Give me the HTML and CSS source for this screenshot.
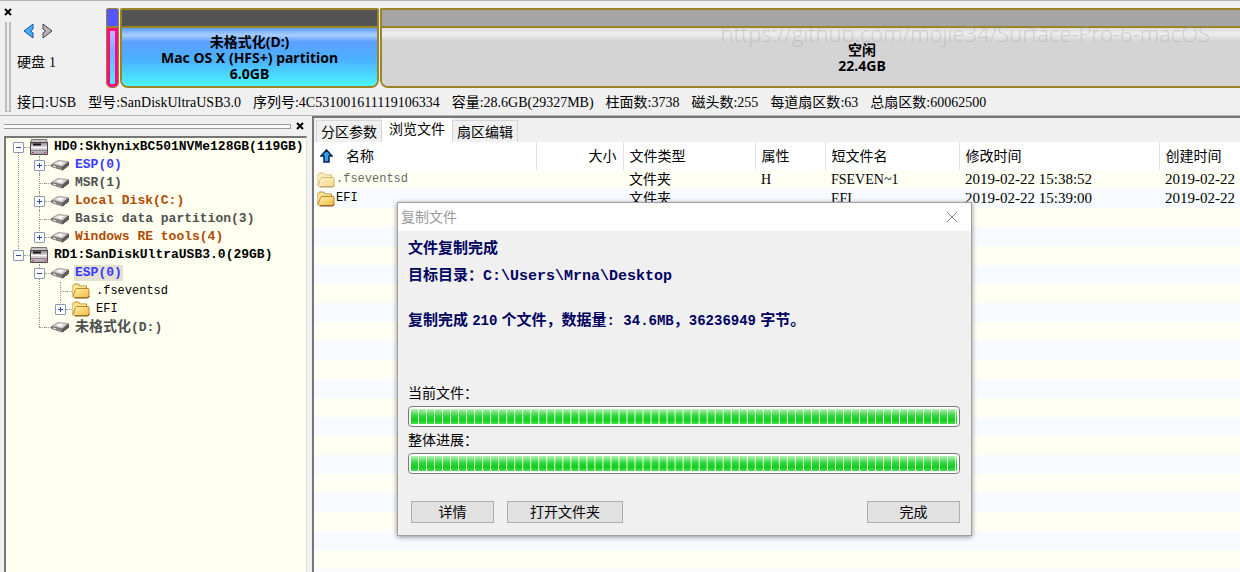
FILE: index.html
```
<!DOCTYPE html>
<html lang="zh-CN">
<head>
<meta charset="utf-8">
<title>硬盘分区</title>
<link rel="stylesheet" href="styles.css">
</head>
<body>
<svg class="defs" width="0" height="0" aria-hidden="true">
  <defs>
    <linearGradient id="gold" x1="0" y1="0" x2="1" y2="1"><stop offset="0" stop-color="#fff3b0"/><stop offset="1" stop-color="#f5b93c"/></linearGradient>
    <linearGradient id="steel" x1="0" y1="0" x2="0" y2="1"><stop offset="0" stop-color="#8d8488"/><stop offset="0.4" stop-color="#e2dde0"/><stop offset="1" stop-color="#a49ca0"/></linearGradient>
    <symbol id="i-folder" viewBox="0 0 18 16">
      <path d="M1 13.5V2.5L2.5 1h4L8 3h6.5V5" fill="#ffe9a0" stroke="#b8862c"/>
      <path d="M1 13.5V3.5h13V5H4z" fill="#ffe28a"/>
      <path d="M4.5 5.5h12l.5 1v6.5l-1.500 1.500H2L1 13.500 3.500 6.500z" fill="url(#gold)" stroke="#b8862c"/>
      <path d="M3 15h13l1.500-2" fill="none" stroke="#7c5a20"/>
    </symbol>
    <symbol id="i-disk" viewBox="0 0 18 16">
      <path d="M1.500.500h15l1 4H.500z" fill="#c9c4c6" stroke="#77716f"/>
      <path d="M.5 3.500h17v12H.5z" fill="url(#steel)" stroke="#4d484a"/>
      <path d="M3 5.500h8" stroke="#111" stroke-width="2"/>
      <path d="M1 8.500h16" stroke="#fff"/>
      <path d="M1 11.500h16" stroke="#888083"/>
      <path d="M2 13.500h2M14 13.500h2" stroke="#c03a78"/>
    </symbol>
    <symbol id="i-part" viewBox="0 0 18 12">
      <path d="M1 5 7 1.500l10 1L11.500 8z" fill="#d0cdcd" stroke="#a5a1a1"/>
      <path d="M.5 5.500v2L11.500 11V8z" fill="#8d8989" stroke="#777373"/>
      <path d="M11.500 8v3l6-4.500V3z" fill="#5f5b5b" stroke="#555151"/>
      <path d="M5 4l4-1.500 4 1L9.500 6z" fill="#f8f7f7"/>
      <path d="M2 7l3 1" stroke="#eee"/>
    </symbol>
  </defs>
</svg>

<header class="disk-panel">
  <div class="grip">
    <button class="close" type="button" aria-label="关闭磁盘栏"><svg viewBox="0 0 8 8"><path d="M1 1l6 6M7 1L1 7"/></svg></button>
    <i class="grip-bars"></i>
  </div>
  <div class="disk-main">
    <div class="disk-row">
      <div class="disk-nav">
        <div class="arrows">
          <button type="button" aria-label="上一个硬盘"><svg viewBox="0 0 12 16"><path d="M10 1v5L7.500 8l2.500 2v5L1 8z" fill="#45b2f5" stroke="#1c4fa0"/></svg></button>
          <button type="button" aria-label="下一个硬盘"><svg viewBox="0 0 12 16"><path d="M2 1v5l2.500 2L2 10v5l9-7z" fill="#b5b5b5" stroke="#454545"/></svg></button>
        </div>
        <span class="disk-name">硬盘 <span class="latin">1</span></span>
      </div>
      <div class="part part-esp"><div class="cap"></div><div class="body"></div></div>
      <div class="part part-hfs"><div class="cap"></div>
        <div class="body"><span>未格式化(D:)</span><span>Mac OS X (HFS+) partition</span><span>6.0GB</span></div></div>
      <div class="part part-free"><div class="cap"></div>
        <div class="body"><span>空闲</span><span>22.4GB</span></div></div>
    </div>
    <ul class="facts">
      <li>接口<span class="latin">:USB</span></li>
      <li>型号<span class="latin">:SanDiskUltraUSB3.0</span></li>
      <li>序列号<span class="latin">:4C531001611119106334</span></li>
      <li>容量<span class="latin">:28.6GB(29327MB)</span></li>
      <li>柱面数<span class="latin">:3738</span></li>
      <li>磁头数<span class="latin">:255</span></li>
      <li>每道扇区数<span class="latin">:63</span></li>
      <li>总扇区数<span class="latin">:60062500</span></li>
    </ul>
  </div>
  <p class="watermark">https://github.com/mojie34/Surface-Pro-6-macOS</p>
</header>

<main class="work">
  <aside class="side">
    <div class="dock"><i class="dock-bars"></i>
      <button class="close" type="button" aria-label="关闭目录树"><svg viewBox="0 0 8 8"><path d="M1 1l6 6M7 1L1 7"/></svg></button></div>
    <nav class="tree-box">
      <ul class="tree">
        <li><div class="node"><button class="tog" type="button" aria-label="折叠 HD0"></button><svg class="ico disk"><use href="#i-disk"/></svg><span class="lbl">HD0:SkhynixBC501NVMe128GB(119GB)</span></div>
          <ul>
            <li><div class="node"><button class="tog plus" type="button" aria-label="展开 ESP"></button><svg class="ico part-ico"><use href="#i-part"/></svg><span class="lbl blue">ESP(0)</span></div></li>
            <li><div class="node"><i class="stub"></i><svg class="ico part-ico"><use href="#i-part"/></svg><span class="lbl gray">MSR(1)</span></div></li>
            <li><div class="node"><button class="tog plus" type="button" aria-label="展开 Local Disk"></button><svg class="ico part-ico"><use href="#i-part"/></svg><span class="lbl rust">Local Disk(C:)</span></div></li>
            <li><div class="node"><i class="stub"></i><svg class="ico part-ico"><use href="#i-part"/></svg><span class="lbl gray">Basic data partition(3)</span></div></li>
            <li><div class="node"><button class="tog plus" type="button" aria-label="展开 Windows RE tools"></button><svg class="ico part-ico"><use href="#i-part"/></svg><span class="lbl rust">Windows RE tools(4)</span></div></li>
          </ul></li>
        <li><div class="node"><button class="tog" type="button" aria-label="折叠 RD1"></button><svg class="ico disk"><use href="#i-disk"/></svg><span class="lbl">RD1:SanDiskUltraUSB3.0(29GB)</span></div>
          <ul>
            <li><div class="node"><button class="tog" type="button" aria-label="折叠 ESP"></button><svg class="ico part-ico"><use href="#i-part"/></svg><span class="lbl blue selected">ESP(0)</span></div>
              <ul>
                <li><div class="node"><i class="stub"></i><svg class="ico"><use href="#i-folder"/></svg><span class="lbl plain">.fseventsd</span></div></li>
                <li><div class="node"><button class="tog plus" type="button" aria-label="展开 EFI"></button><svg class="ico"><use href="#i-folder"/></svg><span class="lbl plain">EFI</span></div></li>
              </ul></li>
            <li><div class="node"><i class="stub"></i><svg class="ico part-ico"><use href="#i-part"/></svg><span class="lbl gray"><span class="han">未格式化</span>(D:)</span></div></li>
          </ul></li>
      </ul>
    </nav>
  </aside>

  <section class="content">
    <div class="tabs" role="tablist">
      <button type="button" role="tab">分区参数</button>
      <button type="button" role="tab" class="active" aria-selected="true">浏览文件</button>
      <button type="button" role="tab">扇区编辑</button>
    </div>
    <div class="list">
      <table>
        <colgroup><col class="c-name"><col class="c-size"><col class="c-type"><col class="c-attr"><col class="c-short"><col class="c-mod"><col></colgroup>
        <thead>
          <tr><th><span class="cell"><svg class="up" viewBox="0 0 13 14"><path d="M6.500 1 12 7H9v6H4V7H1z" fill="#31a3ee" stroke="#08204a" stroke-width="1.500"/></svg>名称</span></th><th class="right">大小</th><th>文件类型</th><th>属性</th><th>短文件名</th><th>修改时间</th><th>创建时间</th></tr>
        </thead>
        <tbody>
          <tr><td><span class="cell file hidden-file"><svg class="ico"><use href="#i-folder"/></svg><span class="mono">.fseventsd</span></span></td><td></td><td>文件夹</td><td class="latin">H</td><td class="latin">FSEVEN~1</td><td class="date">2019-02-22 15:38:52</td><td class="date">2019-02-22</td></tr>
          <tr><td><span class="cell file"><svg class="ico"><use href="#i-folder"/></svg><span class="mono">EFI</span></span></td><td></td><td>文件夹</td><td class="latin"></td><td class="latin">EFI</td><td class="date">2019-02-22 15:39:00</td><td class="date">2019-02-22</td></tr>
        </tbody>
      </table>
    </div>

    <div class="dialog" role="dialog" aria-labelledby="dlg-title">
      <div class="title"><span id="dlg-title">复制文件</span>
        <button type="button" aria-label="关闭"><svg viewBox="0 0 12 12"><path d="M1 1l10 10M11 1L1 11"/></svg></button></div>
      <div class="dialog-body">
        <div class="message">
          <p class="big">文件复制完成</p>
          <p class="big">目标目录：<span class="path">C:\Users\Mrna\Desktop</span></p>
          <p class="sum">复制完成 <span class="num">210</span> 个文件，数据量<span class="num">: 34.6MB</span>，<span class="num">36236949</span> 字节。</p>
        </div>
        <label for="p1">当前文件：</label>
        <progress id="p1" value="100" max="100"></progress>
        <label for="p2">整体进展：</label>
        <progress id="p2" value="100" max="100"></progress>
        <div class="actions">
          <button type="button" class="b-detail">详情</button>
          <button type="button" class="b-open">打开文件夹</button>
          <button type="button" class="b-done">完成</button>
        </div>
      </div>
    </div>
  </section>
</main>
</body>
</html>
```
FILE: styles.css
```
* { box-sizing: border-box; }
body {
  margin: 0; min-height: 100vh; display: flex; flex-direction: column;
  background: #f0f0f0; color: #000; overflow: hidden;
  font: 14px/18px "Liberation Sans", "Noto Sans CJK SC", sans-serif;
}
button { font: inherit; color: inherit; padding: 0; margin: 0; border: 0; background: none; }
ul { list-style: none; margin: 0; padding: 0; }
p { margin: 0; }
.defs { position: absolute; }
.mono { font-family: "Liberation Mono", monospace; font-size: 12px; }
.latin { font-family: "Liberation Serif", serif; font-size: 14px; }
.date { font-family: "Liberation Serif", serif; font-size: 15px; }

/* disk strip */
.disk-panel { position: relative; display: flex; padding-top: 7px; border-top: 1px solid #b4b4b4; border-bottom: 1px solid #b4b4b4; }
.grip { width: 16px; display: flex; flex-direction: column; padding-left: 4px; gap: 6px; }
.close { width: 8px; height: 8px; display: flex; }
.close svg { width: 8px; height: 8px; stroke: #000; stroke-width: 2; }
.grip-bars { width: 6px; flex: 1; margin: 0 0 3px 1px; border: 1px solid #bdbdbd; border-width: 0 2px 1px; }
.disk-main { flex: 1; min-width: 0; padding-bottom: 3px; }
.disk-row { display: flex; gap: 1px; height: 80px; }
.disk-nav { width: 89px; padding-top: 15px; display: flex; flex-direction: column; gap: 14px; }
.arrows { display: flex; gap: 6px; padding-left: 7px; }
.arrows button, .arrows svg { width: 12px; height: 16px; display: block; }
.disk-name { padding-left: 1px; }
.part { display: flex; flex-direction: column; border: 2px solid #9c8425; border-radius: 2px 2px 8px 8px; overflow: hidden; }
.cap { height: 18px; border-bottom: 2px solid #9c8425; }
.body { flex: 1; display: flex; flex-direction: column; align-items: center; padding-top: 6px; font: bold 14px/16px "Noto Sans", "Noto Sans CJK SC", sans-serif; }
.part-esp { width: 13px; border-width: 1px; border-radius: 2px 2px 5px 5px; }
.part-esp .cap { height: 19px; background: #5656ff; }
.part-esp .body { border: 3px solid #ff0a80; border-radius: 0 0 4px 4px; background: linear-gradient(#c3b8ff, #6ab5ff 40%, #50ecff); }
.part-hfs { width: 259px; }
.part-hfs .cap { background: #535353; }
.part-hfs .body { background: linear-gradient(#5b9dff, #a9ceff 7px, #5ca0ff 14px, #4bb1ff 32px, #4cf4ff); }
.part-free { flex: 1; border-right: 0; border-radius: 2px 0 0 8px; }
.part-free .cap { background: #a5a5a5; }
.part-free .body { padding: 14px 0 0 102px; background: linear-gradient(#dcdcdc, #eee 6px, #d4d4d4 13px); }
.facts { display: flex; gap: 12px; padding: 5px 0 0 1px; white-space: nowrap; }
.watermark { position: absolute; right: 30px; top: 17px; font: 300 22px/30px "Open Sans", sans-serif; color: rgba(150, 150, 150, .35); }

/* work area */
.work { flex: 1; display: flex; min-height: 0; }
.side { width: 312px; display: flex; flex-direction: column; padding: 0 5px 0 4px; }
.dock { height: 20px; display: flex; align-items: center; gap: 5px; padding-right: 3px; }
.dock-bars { flex: 1; height: 5px; border: 1px solid #9c9c9c; border-left: 0; background: #fafafa; }
.tree-box { flex: 1; border: 2px solid #777; border-right: 1px solid #e0e0e0; border-bottom: 0; background: #fffff0; padding: 0 0 0 7px; }
.tree li { position: relative; }
.tree ul { padding-left: 21px; }
.tree li::before { content: ""; position: absolute; left: 5px; top: 0; bottom: 0; border-left: 1px dotted #999; }
.tree li:last-child::before { bottom: auto; height: 9px; }
.tree > li:first-child::before { top: 9px; }
.node { display: flex; align-items: center; height: 18px; position: relative; }
.tog { position: relative; width: 11px; height: 11px; margin-right: 6px; border: 1px solid #8c9ab0; border-radius: 1px; background: #fff; flex: none; }
.tog::before { content: ""; position: absolute; left: 2px; top: 4px; width: 5px; height: 1px; background: #2b4fa8; }
.tog.plus::after { content: ""; position: absolute; left: 4px; top: 2px; width: 1px; height: 5px; background: #2b4fa8; }
.node::before { content: ""; position: absolute; left: 11px; width: 6px; top: 9px; border-top: 1px dotted #999; }
.stub { width: 12px; margin: 0 0 0 5px; border-top: 1px dotted #999; }
.ico { width: 18px; height: 16px; flex: none; }
.part-ico { height: 12px; }
.lbl { margin-left: 5px; padding: 0 1px; font: bold 13px/16px "Liberation Mono", "Noto Sans CJK SC", monospace; white-space: nowrap; }
.lbl .han { font-size: 14px; }
.blue { color: #3a3aff; }
.gray { color: #505050; }
.rust { color: #b04a00; }
.plain { font-weight: normal; font-size: 12px; }
.selected { background: #e3e0d0; }

/* file list */
.content { position: relative; flex: 1; min-width: 0; display: flex; flex-direction: column; border: 2px solid #777; border-width: 2px 0 0 2px; }
.tabs { display: flex; align-items: flex-end; height: 24px; padding-left: 2px; }
.tabs button { height: 22px; padding: 0 4px; border: 1px solid #d5d5d5; border-bottom: 0; }
.tabs .active { height: 24px; padding: 0 6px 3px; background: #fff; border-color: #fff; }
.list { flex: 1; background: linear-gradient(#fff, #fff) 0 0 / 100% 28px no-repeat, repeating-linear-gradient(#fffff4 0 19px, #f7fbff 19px 38px) 0 28px; overflow: hidden; }
table { width: 100%; border-collapse: collapse; table-layout: fixed; white-space: nowrap; }
.c-name { width: 222px; }
.c-size { width: 87px; }
.c-type { width: 132px; }
.c-attr { width: 70px; }
.c-short { width: 134px; }
.c-mod { width: 200px; }
th, td { padding: 0 6px; text-align: left; font-weight: normal; overflow: hidden; }
th { height: 28px; border-right: 1px solid #e2e2e2; }
th:last-child { border-right: 0; }
th.right { text-align: right; }
td { height: 19px; line-height: 19px; }
.cell { display: flex; align-items: center; gap: 13px; }
.file { gap: 1px; margin-left: -3px; }
.hidden-file { opacity: .6; }
.up { width: 13px; height: 14px; }

/* copy dialog */
.dialog { position: absolute; left: 83px; top: 84px; width: 575px; background: #f0f0f0; border: 1px solid #a0a0a0; box-shadow: 0 1px 5px rgba(0, 0, 0, .45); }
.title { display: flex; align-items: center; justify-content: space-between; height: 28px; padding: 0 13px 0 3px; background: #fff; color: #999; }
.title button, .title svg { width: 12px; height: 12px; display: block; }
.title svg { stroke: #888; }
.dialog-body { display: flex; flex-direction: column; padding: 8px 11px 12px 10px; }
.message { height: 144px; color: #000060; font-weight: bold; }
.big { font-size: 15px; line-height: 18px; margin-bottom: 9px; }
.path { font-family: "Liberation Mono", monospace; font-size: 15px; }
.sum { font-size: 15px; margin-top: 25px; }
.num { font-family: "Liberation Mono", monospace; font-size: 14px; }
label { line-height: 20px; height: 23px; }
progress { appearance: none; display: block; width: 100%; height: 21px; margin-bottom: 3px; padding: 2px; border: 1px solid #777; border-radius: 4px; background: #fff; }
progress::-webkit-progress-bar { background: #fff; }
progress::-webkit-progress-value {
  background: linear-gradient(90deg, transparent 7px, #fff 7px) 0 0 / 8px 100% round, linear-gradient(#b5f2b5, #2fd83a 45%, #12cc1e 75%, #4be052);
}
.actions { display: flex; gap: 13px; padding: 24px 0 0 3px; }
.actions button { height: 22px; line-height: 18px; border: 1px solid #adadad; background: #e1e1e1; }
.b-detail { width: 83px; }
.b-open { width: 116px; }
.b-done { width: 93px; margin-left: auto; }
```
